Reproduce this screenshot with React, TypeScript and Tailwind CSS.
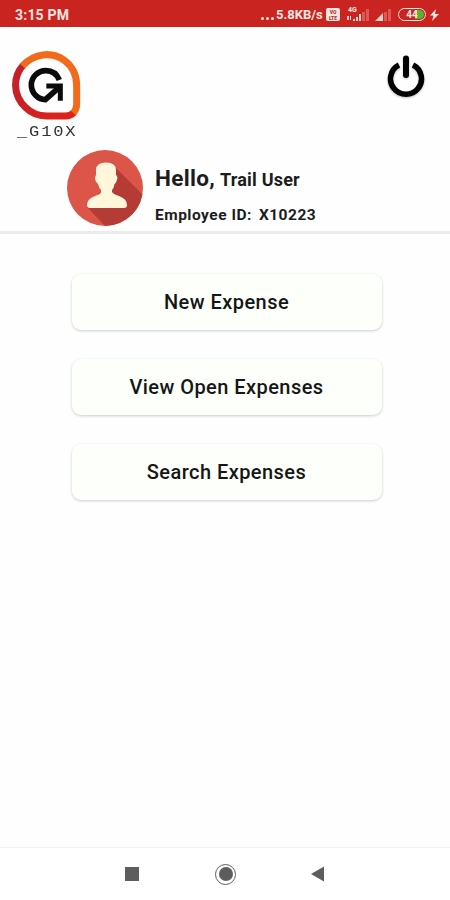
const actions = ["New Expense", "View Open Expenses", "Search Expenses"];

function StatusBar() {
  return (
    <div className="flex h-[27px] items-center bg-[#c9241f] pt-[2px] pr-[11px] pl-[15px] text-[#fde6e2]">
      <span className="text-[14px] leading-none font-bold tracking-[0.2px]">3:15 PM</span>
      <div className="ml-auto flex items-center">
        <span className="flex gap-[2px] pt-[7px] pr-[2px]">
          <i className="size-[3px] rounded-full bg-[#fde6e2]" />
          <i className="size-[3px] rounded-full bg-[#fde6e2]" />
          <i className="size-[3px] rounded-full bg-[#fde6e2]" />
        </span>
        <span className="w-[49px] text-[13px] leading-none font-bold whitespace-nowrap">5.8KB/s</span>
        <span className="ml-px flex h-[13px] w-[14px] flex-col items-center justify-center rounded-[2px] bg-[#fde6e2] text-[5px] leading-[6px] font-black text-[#a8322c]">
          <span>VO</span>
          <span>LTE</span>
        </span>
        <div className="relative ml-[6px] h-[14px] w-[24px]">
          <span className="absolute -top-px left-[2px] text-[7px] leading-[6px] font-bold">4G</span>
          <svg viewBox="0 0 24 14" className="h-[14px] w-[24px]">
            <path d="M1 8h2v4H1zM4 8h1v4H4zM7 11h2v2H7zM10 9h2v4h-2zM13 6h2v7h-2z" fill="#fbd0c8" />
            <path d="M16 4h3v9h-3zM20 1h3v12h-3z" fill="#dc5a52" />
          </svg>
        </div>
        <svg viewBox="0 0 18 14" className="ml-[5px] h-[14px] w-[18px]">
          <path d="M0 13L8 5v8z" fill="#fbd0c8" />
          <path d="M9 4h3v9H9zM13 1h3v12h-3z" fill="#dc5a52" />
        </svg>
        <div className="ml-[5px] flex h-[13px] w-[28px] items-center rounded-full border border-[#fde6e2] p-px">
          <span className="relative flex h-full w-full items-center justify-center overflow-hidden rounded-full">
            <i className="absolute inset-y-0 right-0 w-[9px] bg-[#55b52c]" />
            <b className="relative text-[10px] leading-none">44</b>
          </span>
        </div>
        <svg viewBox="0 0 9 12" className="ml-[4px] h-[12px] w-[9px]">
          <path d="M6 0L0 6.500h3.500L2 12l7-7H5z" fill="#fde6e2" />
        </svg>
      </div>
    </div>
  );
}

function Logo() {
  return (
    <div className="w-[69px] pt-px">
      <svg viewBox="36 30 207 207" fill="none" className="size-[69px]">
        <defs>
          <linearGradient id="red" x1="45" y1="110" x2="210" y2="230" gradientUnits="userSpaceOnUse">
            <stop stopColor="#c2202b" />
            <stop offset="1" stopColor="#e0221b" />
          </linearGradient>
        </defs>
        <path d="M70 72C38 107 38 162 76 199Q102 225 140 225H196Q212 225 222 214" stroke="url(#red)" strokeWidth="21" />
        <path d="M67 75C101 37 154 30 193 58Q230 86 230 134V190Q230 205 220 216" stroke="#f26a1b" strokeWidth="21" />
        <path d="M178 117C170 98 156 89 138 89C114 89 94 108 94 132C94 156 114 176 136 176L180 137" stroke="#0b0b0b" strokeWidth="17" />
        <path d="M139 135H181V179" stroke="#0b0b0b" strokeWidth="15" />
      </svg>
      <p className="mt-[3px] ml-[5px] origin-left scale-x-[1.22] font-['Liberation_Mono',monospace] text-[14px] leading-[18px] tracking-[1.500px] whitespace-nowrap text-[#333]">
        _G10X
      </p>
    </div>
  );
}

function Avatar() {
  return (
    <svg viewBox="0 0 76 76" className="size-[76px] shrink-0">
      <defs>
        <clipPath id="disc">
          <circle cx="38" cy="38" r="38" />
        </clipPath>
      </defs>
      <g clipPath="url(#disc)">
        <path d="M0 0h76v76H0z" fill="#db5549" />
        <path d="M47 16L80 49V80H42L20 57L35 40z" fill="#b43c34" />
      </g>
      <path
        d="M29 20Q29 12.500 39 12.500Q49 12.500 49 20V25Q51 26 50 30Q49 33 47.500 34Q47 38 45 40V42Q46 44 52 46Q60 49 60 55Q60 58 57 58H23Q20 58 20 55Q20 49 28 46Q34 44 34 42V40Q32 38 31 34Q29 33 28 29Q28 26 29 25Z"
        fill="#fff6dc"
      />
    </svg>
  );
}

function Header() {
  return (
    <header className="h-[207px] border-b-[3px] border-[#ebebeb] pt-[23px]">
      <div className="flex h-[100px] justify-between pr-[25px] pl-[12px]">
        <Logo />
        <button aria-label="Log out" className="mt-[4px] h-[46px] w-[38px]">
          <svg viewBox="0 0 38 46" fill="none" className="h-[46px] w-[38px] drop-shadow-[0_1px_1px_rgba(0,0,0,0.25)]">
            <path d="M12 11A15.500 15.500 0 1 0 26 11" stroke="#000" strokeWidth="5.500" />
            <path d="M19 4.500V21" stroke="#000" strokeWidth="6" strokeLinecap="round" />
          </svg>
        </button>
      </div>
      <div className="flex pl-[67px]">
        <Avatar />
        <div className="pt-[15px] pl-[12px] font-bold text-[#1c1c1c]">
          <p className="flex items-baseline leading-[26px] whitespace-nowrap">
            <span className="text-[22.500px] tracking-[0.3px]">Hello,</span>
            <span className="ml-[5px] text-[18px] tracking-[0.2px]">Trail User</span>
          </p>
          <p className="mt-[13px] flex text-[15.500px] leading-[18px] tracking-[0.5px] whitespace-nowrap">
            <span>Employee ID:</span>
            <span className="ml-[7px]">X10223</span>
          </p>
        </div>
      </div>
    </header>
  );
}

function NavBar() {
  return (
    <nav className="flex h-[53px] items-center border-t border-[#f1f1f1] bg-white pl-[125px]">
      <span className="size-[14px] bg-[#5d5d5d]" />
      <span className="ml-[76px] flex size-[21px] items-center justify-center rounded-full border-[1.500px] border-[#5d5d5d]">
        <i className="size-[14px] rounded-full bg-[#5d5d5d]" />
      </span>
      <svg viewBox="0 0 14 16" className="ml-[75px] h-[16px] w-[13px]">
        <path d="M14 0V16L0 8z" fill="#5d5d5d" />
      </svg>
    </nav>
  );
}

export default function App() {
  return (
    <div className="flex h-[900px] w-[450px] flex-col overflow-hidden bg-[#fefefe] font-[Roboto,sans-serif]">
      <StatusBar />
      <Header />
      <main className="flex flex-1 flex-col items-center gap-[29px] pt-[40px] pl-[3px]">
        {actions.map((label) => (
          <button
            key={label}
            className="h-[56px] w-[310px] rounded-[9px] bg-[#fdfffa] text-[20px] font-medium tracking-[0.45px] text-[#161616] shadow-[0_1px_3px_rgba(0,0,0,0.2)]"
          >
            {label}
          </button>
        ))}
      </main>
      <NavBar />
    </div>
  );
}
